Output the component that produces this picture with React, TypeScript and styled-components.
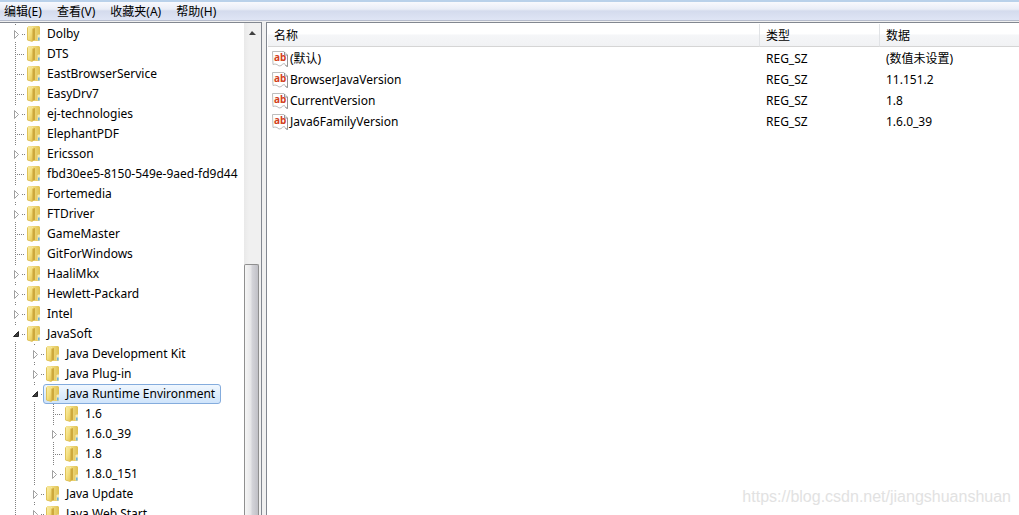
import React from "react";
import styled, { createGlobalStyle, css } from "styled-components";

const GlobalStyle = createGlobalStyle`
  * { box-sizing: border-box; }
  html, body, #root { height: 100%; margin: 0; }
  body {
    overflow: hidden;
    background: #f0f0f0;
    color: #000;
    font: 12px/20px "Noto Sans", "Noto Sans CJK SC", sans-serif;
  }
  button { font: inherit; color: inherit; border: 0; background: none; padding: 0; margin: 0; }
`;

const Window = styled.div`
  position: relative;
  height: 100%;
  display: flex;
  flex-direction: column;
`;

const MenuBar = styled.nav`
  flex: none;
  display: flex;
  gap: 15px;
  height: 21px;
  padding: 0 4px;
  border-top: 2px solid #b9d1ea;
  border-bottom: 1px solid #b6bccc;
  background: linear-gradient(#f8f9fd 0, #e9edf7 40%, #d4dbed 50%, #dfe5f5 100%);
`;

const MenuItem = styled.button`
  line-height: 20px;
  white-space: nowrap;
`;

const Panes = styled.div`
  flex: 1;
  min-height: 0;
  display: flex;
  gap: 4px;
  padding-top: 1px;
`;

const TreePane = styled.section`
  flex: none;
  width: 262px;
  display: flex;
  border-top: 1px solid #828790;
  border-right: 1px solid #828790;
  background: #fff;
`;

const TreeView = styled.div`
  flex: 1;
  min-width: 0;
  overflow: hidden;
  padding: 1px 0 0 6px;
`;

const TreeList = styled.ul`
  list-style: none;
  margin: 0;
  padding: 0;
`;

const TreeRow = styled.div`
  display: flex;
  height: 20px;
`;

const dots = "#808080";

const Guide = styled.span<{ $kind: "line" | "arrow" | "leaf" | "last" }>`
  flex: none;
  width: 19px;
  height: 20px;
  background-repeat: no-repeat;
  ${({ $kind }) => {
    const vertical = `repeating-linear-gradient(${dots} 0 1px, transparent 1px 2px)`;
    const horizontal = `repeating-linear-gradient(90deg, ${dots} 0 1px, transparent 1px 2px)`;
    if ($kind === "line")
      return css`
        background-image: ${vertical};
        background-size: 1px 20px;
        background-position: 9px 0;
      `;
    if ($kind === "leaf")
      return css`
        background-image: ${vertical}, ${horizontal};
        background-size: 1px 20px, 10px 1px;
        background-position: 9px 0, 9px 10px;
      `;
    if ($kind === "arrow")
      return css`
        background-image: ${vertical}, ${vertical}, ${horizontal};
        background-size: 1px 2px, 1px 2px, 3px 1px;
        background-position: 9px 0, 9px 18px, 16px 10px;
      `;
    return css`
      background-image: ${vertical}, ${horizontal};
      background-size: 1px 2px, 3px 1px;
      background-position: 9px 0, 16px 10px;
    `;
  }}
`;

const Toggle = styled.button`
  display: block;
  width: 16px;
  height: 20px;
  svg { display: block; }
`;

const NodeButton = styled.button<{ $selected?: boolean }>`
  display: flex;
  align-items: center;
  height: 20px;
  margin-left: -1px;
  padding: 0 5px 0 2px;
  border: 1px solid transparent;
  border-radius: 3px;
  white-space: nowrap;
  ${({ $selected }) =>
    $selected &&
    css`
      border-color: #84acdd;
      background: linear-gradient(#f0f7fe, #cfe4fb);
    `}
`;

const NodeText = styled.span`
  margin-left: 6px;
  line-height: 18px;
`;

const ScrollTrack = styled.div`
  flex: none;
  width: 17px;
  display: flex;
  flex-direction: column;
  background: linear-gradient(90deg, #e9e9e9, #f0f0f0 30%, #f0f0f0);
`;

const ScrollArrow = styled.button`
  height: 17px;
  width: 16px;
  svg { display: block; }
`;

const ScrollThumb = styled.div`
  flex: 1;
  width: 15px;
  margin-top: 224px;
  border: 1px solid #8f8f8f;
  border-bottom: 0;
  border-radius: 2px 2px 0 0;
  background: linear-gradient(90deg, #f5f5f5 0, #e6e6e8 45%, #d4d4d9 55%, #c0c0c6 100%);
`;

const ValuePane = styled.section`
  flex: 1;
  min-width: 0;
  overflow: hidden;
  padding: 1px 0 0 1px;
  border-top: 1px solid #828790;
  border-left: 1px solid #828790;
  background: #fff;
`;

const ValueTable = styled.table`
  width: 100%;
  table-layout: fixed;
  border-collapse: separate;
  border-spacing: 0;
`;

const Column = styled.col<{ $width?: number }>`
  width: ${({ $width }) => ($width ? `${$width}px` : "auto")};
`;

const HeaderCell = styled.th`
  height: 23px;
  padding: 2px 6px 0;
  border-bottom: 1px solid #d5d5d5;
  border-right: 1px solid #e1e3e6;
  background: linear-gradient(#fff 0 45%, #f5f6f8 50%, #f1f2f4 100%);
  text-align: left;
  font-weight: normal;
  line-height: 20px;

  &:last-child {
    border-right: 0;
  }
`;

const Cell = styled.td`
  height: 21px;
  padding: 2px 6px 0;
  line-height: 19px;
  white-space: nowrap;
`;

const NameCell = styled(Cell)`
  padding: 2px 4px 0;
`;

const NameContent = styled.div`
  display: flex;
  align-items: center;
  gap: 2px;
  height: 19px;
`;

const Watermark = styled.div`
  position: absolute;
  right: 8px;
  bottom: 8px;
  font: 16px/20px "Liberation Sans", sans-serif;
  color: #e2e2e2;
`;

const FolderIcon = () => (
  <svg width="14" height="16" viewBox="0 0 14 16" aria-hidden="true">
    <defs>
      <linearGradient id="folderFront" x1="0" x2="1" y1="0" y2="1">
        <stop offset="0" stopColor="#fbf0ae" />
        <stop offset=".5" stopColor="#f5e184" />
        <stop offset="1" stopColor="#e3c350" />
      </linearGradient>
      <linearGradient id="folderBack" x1="0" x2="1" y1="0" y2="0">
        <stop offset="0" stopColor="#f3e08a" />
        <stop offset=".5" stopColor="#eed878" />
        <stop offset="1" stopColor="#dfc053" />
      </linearGradient>
    </defs>
    <path d="M1 0h11l1 1v13l-1 1H5L1 14z" fill="url(#folderBack)" />
    <path d="M5 3 8 2v12l-3 1z" fill="#cda83c" />
    <path d="M0 1.500 1 .8l4.500 1.700v13L0 14z" fill="url(#folderFront)" />
    <path d="M.5 1.500v12.500l5 1.500" fill="none" stroke="#dfc25a" />
    <path d="M1 1h4l1 1" fill="none" stroke="#f4e6a0" />
    <path d="M10.500 9.500 11.500 8.500h1.500v6h-2.500z" fill="#f3e9bb" />
    <path d="M11.200 11.500h1.300v3h-1.300z" fill="#4aa5e6" />
  </svg>
);

const StringIcon = () => (
  <svg width="16" height="16" viewBox="0 0 16 16" aria-hidden="true">
    <path
      d="M.5.500h11.500l3.500 3.500v11.500l-2-1-1-2-2 .5-1 1.500-2.500.5-2-1.500-2-.5-2 .5z"
      fill="#fff"
      stroke="#bdbdbd"
    />
    <path d="M12.500 1v3h3v11.500l-2-1" fill="none" stroke="#949494" />
    <text x="2" y="10" fontFamily="Noto Sans, sans-serif" fontWeight="bold" fontSize="10" fill="#d2401c">
      ab
    </text>
  </svg>
);

const ArrowIcon = ({ open }: { open: boolean }) => (
  <svg width="16" height="20" viewBox="0 0 16 20" aria-hidden="true">
    {open ? (
      <path d="M12.500 7.500v5H7.500z" fill="#404040" stroke="#262626" />
    ) : (
      <path d="M8.500 6.500v8l4-4z" fill="#fff" stroke="#a0a0a0" />
    )}
  </svg>
);

type TreeNode = { name: string; leaf?: boolean; selected?: boolean; children?: TreeNode[] };

const nodes: TreeNode[] = [
  { name: "Dolby" },
  { name: "DTS", leaf: true },
  { name: "EastBrowserService", leaf: true },
  { name: "EasyDrv7", leaf: true },
  { name: "ej-technologies" },
  { name: "ElephantPDF", leaf: true },
  { name: "Ericsson" },
  { name: "fbd30ee5-8150-549e-9aed-fd9d44", leaf: true },
  { name: "Fortemedia" },
  { name: "FTDriver" },
  { name: "GameMaster", leaf: true },
  { name: "GitForWindows", leaf: true },
  { name: "HaaliMkx" },
  { name: "Hewlett-Packard" },
  { name: "Intel" },
  {
    name: "JavaSoft",
    children: [
      { name: "Java Development Kit" },
      { name: "Java Plug-in" },
      {
        name: "Java Runtime Environment",
        selected: true,
        children: [
          { name: "1.6", leaf: true },
          { name: "1.6.0_39" },
          { name: "1.8", leaf: true },
          { name: "1.8.0_151" },
        ],
      },
      { name: "Java Update" },
      { name: "Java Web Start" },
    ],
  },
];

const Branch = ({ items, depth }: { items: TreeNode[]; depth: number }) => (
  <TreeList role={depth === 0 ? "tree" : "group"}>
    {items.map((node, index) => {
      const open = Boolean(node.children);
      const last = depth === 2 && index === items.length - 1;
      return (
        <li key={node.name} role="treeitem" aria-expanded={node.leaf ? undefined : open} aria-selected={Boolean(node.selected)}>
          <TreeRow>
            {Array.from({ length: depth }, (_, level) => (
              <Guide key={level} $kind="line" />
            ))}
            <Guide $kind={node.leaf ? "leaf" : last ? "last" : "arrow"}>
              {!node.leaf && (
                <Toggle type="button" aria-label={`${open ? "Collapse" : "Expand"} ${node.name}`}>
                  <ArrowIcon open={open} />
                </Toggle>
              )}
            </Guide>
            <NodeButton type="button" $selected={node.selected}>
              <FolderIcon />
              <NodeText>{node.name}</NodeText>
            </NodeButton>
          </TreeRow>
          {node.children && <Branch items={node.children} depth={depth + 1} />}
        </li>
      );
    })}
  </TreeList>
);

const menus = ["编辑(E)", "查看(V)", "收藏夹(A)", "帮助(H)"];

const values = [
  ["(默认)", "REG_SZ", "(数值未设置)"],
  ["BrowserJavaVersion", "REG_SZ", "11.151.2"],
  ["CurrentVersion", "REG_SZ", "1.8"],
  ["Java6FamilyVersion", "REG_SZ", "1.6.0_39"],
];

export default function App() {
  return (
    <Window>
      <GlobalStyle />
      <MenuBar>
        {menus.map((menu) => (
          <MenuItem key={menu} type="button">{menu}</MenuItem>
        ))}
      </MenuBar>
      <Panes>
        <TreePane>
          <TreeView>
            <Branch items={nodes} depth={0} />
          </TreeView>
          <ScrollTrack>
            <ScrollArrow type="button" aria-label="Scroll up">
              <svg width="16" height="17" viewBox="0 0 16 17" aria-hidden="true">
                <path d="M5 12 8 8l4 4z" fill="#404040" />
              </svg>
            </ScrollArrow>
            <ScrollThumb />
          </ScrollTrack>
        </TreePane>
        <ValuePane>
          <ValueTable>
            <colgroup>
              <Column $width={492} />
              <Column $width={120} />
              <Column />
            </colgroup>
            <thead>
              <tr>
                <HeaderCell>名称</HeaderCell>
                <HeaderCell>类型</HeaderCell>
                <HeaderCell>数据</HeaderCell>
              </tr>
            </thead>
            <tbody>
              {values.map(([name, type, data]) => (
                <tr key={name}>
                  <NameCell>
                    <NameContent>
                      <StringIcon />
                      {name}
                    </NameContent>
                  </NameCell>
                  <Cell>{type}</Cell>
                  <Cell>{data}</Cell>
                </tr>
              ))}
            </tbody>
          </ValueTable>
        </ValuePane>
      </Panes>
      <Watermark>https://blog.csdn.net/jiangshuanshuan</Watermark>
    </Window>
  );
}
